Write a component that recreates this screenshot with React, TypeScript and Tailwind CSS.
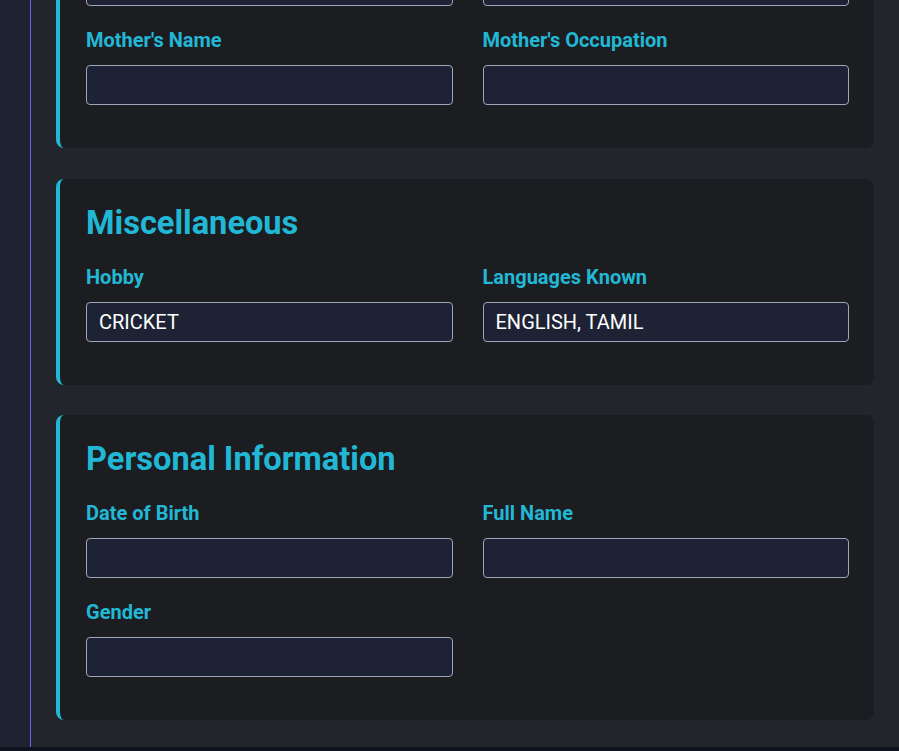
type Field = { label: string; value?: string };

type Section = { title: string; fields: Field[] };

const sections: Section[] = [
  {
    title: "Family Information",
    fields: [
      { label: "Father's Name" },
      { label: "Father's Occupation" },
      { label: "Mother's Name" },
      { label: "Mother's Occupation" },
    ],
  },
  {
    title: "Miscellaneous",
    fields: [
      { label: "Hobby", value: "CRICKET" },
      { label: "Languages Known", value: "ENGLISH, TAMIL" },
    ],
  },
  {
    title: "Personal Information",
    fields: [
      { label: "Date of Birth" },
      { label: "Full Name" },
      { label: "Gender" },
    ],
  },
];

function Card({ section }: { section: Section }) {
  return (
    <section className="rounded-lg border-l-4 border-[#22b8d5] bg-[#1b1d21] pl-[26px] pr-[25px] pt-[25px] pb-[43px]">
      <h2 className="mb-5 text-[32.6px] font-bold leading-[39px] text-[#22b8d5]">{section.title}</h2>
      <div className="grid grid-cols-2 gap-x-[30px] gap-y-5">
        {section.fields.map((f) => (
          <div key={f.label} className="flex flex-col gap-[10px]">
            <label className="text-[20px] font-bold leading-[29px] text-[#22b8d5]">{f.label}</label>
            <input
              readOnly
              value={f.value ?? ""}
              className="h-10 w-full rounded border border-[#9ea6b8] bg-[#1d2334] px-3 text-[20px] text-white outline-none"
            />
          </div>
        ))}
      </div>
    </section>
  );
}

export default function App() {
  return (
    <div className="h-[751px] overflow-hidden bg-[#0e1320] font-['Roboto',sans-serif]">
      <div className="flex h-[747px] overflow-hidden">
        <aside className="w-[31px] shrink-0 border-r border-[#7a5cf6] bg-[#1d2333]" />
        <main className="flex-1 bg-[#22252b] pl-[25px] pr-[25px]">
          <div className="mt-[-157px] flex flex-col gap-[30.5px]">
            {sections.map((s) => (
              <Card key={s.title} section={s} />
            ))}
          </div>
        </main>
      </div>
    </div>
  );
}
